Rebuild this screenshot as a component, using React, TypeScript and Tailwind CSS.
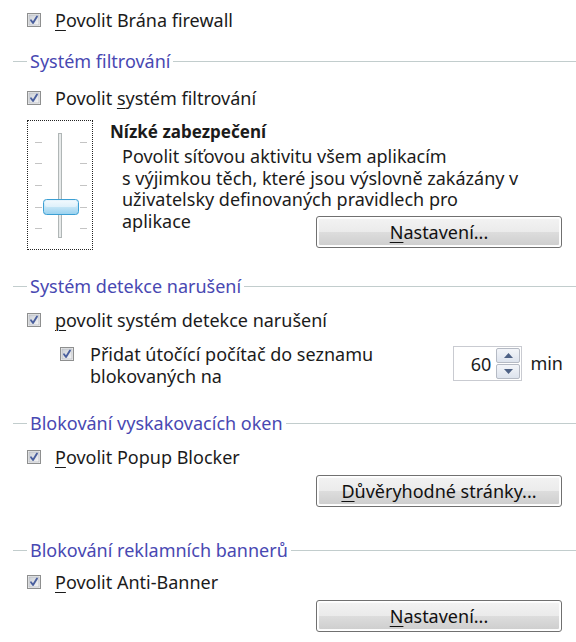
import type { ReactNode } from "react"

const Check = () => (
  <svg width="14" height="14" viewBox="0 0 14 14" className="shrink-0">
    <defs>
      <linearGradient id="cbg" x1="0" y1="0" x2="1" y2="1">
        <stop offset="0" stopColor="#cbcfd5" />
        <stop offset="1" stopColor="#f6f6f6" />
      </linearGradient>
    </defs>
    <rect x="0.5" y="0.5" width="13" height="13" fill="#f4f4f4" stroke="#8e8f8f" />
    <rect x="2" y="2" width="10" height="10" fill="url(#cbg)" stroke="#b8bcc2" strokeWidth="0.8" />
    <path d="M4 7.2 L6 10 L10 3.6" fill="none" stroke="#4a5f9e" strokeWidth="1.9" strokeLinecap="round" strokeLinejoin="round" />
  </svg>
)

const CheckRow = ({ children }: { children: ReactNode }) => (
  <div className="flex h-[22px] items-center pl-[27px]">
    <Check />
    <span className="ml-[14px] whitespace-nowrap">{children}</span>
  </div>
)

const SectionHeader = ({ title, mt }: { title: string; mt: string }) => (
  <div className={`flex h-[22px] items-center ${mt}`}>
    <div className="ml-[13px] h-px w-[14px] bg-[#c2cdcd]" />
    <span className="mx-[3px] whitespace-nowrap text-[#4848b2]">{title}</span>
    <div className="h-px flex-1 bg-[#c2cdcd]" />
  </div>
)

const Key = ({ children }: { children: ReactNode }) => (
  <span className="underline decoration-1 underline-offset-[3px]">{children}</span>
)

const WinButton = ({ children, className }: { children: ReactNode; className: string }) => (
  <div className={`ml-[316px] w-[246px] h-[32px] rounded-[3px] border border-[#707070] p-px ${className}`}>
    <div className="flex h-full items-center justify-center rounded-[2px] border border-[#fcfcfc] bg-[linear-gradient(to_bottom,#f2f2f2_0%,#ebebeb_49%,#dddddd_50%,#cfcfcf_100%)] text-[#111]">
      {children}
    </div>
  </div>
)

const Slider = () => (
  <div className="h-[130px] w-[66px] shrink-0 border border-dotted border-[#222]">
    <svg width="64" height="128" viewBox="0 0 64 128">
      <defs>
        <linearGradient id="thumb" x1="0" y1="0" x2="0" y2="1">
          <stop offset="0" stopColor="#eaf6fd" />
          <stop offset="0.5" stopColor="#c4e5f6" />
          <stop offset="1" stopColor="#98d1ef" />
        </linearGradient>
      </defs>
      <rect x="30.5" y="12.5" width="3" height="104" fill="#e7eaea" stroke="#b0b6b6" />
      {[21, 42, 64, 86, 107].map((y) => (
        <g key={y} stroke="#c4c4c4" strokeWidth="1">
          <line x1="7" y1={y + 0.5} x2="14" y2={y + 0.5} />
          <line x1="52" y1={y + 0.5} x2="59" y2={y + 0.5} />
        </g>
      ))}
      <rect x="15.5" y="78.5" width="35" height="15" rx="3" fill="url(#thumb)" stroke="#3c9fd3" />
      <rect x="17" y="80" width="32" height="6" rx="2" fill="#ffffff" opacity="0.45" />
    </svg>
  </div>
)

const Spin = () => (
  <div className="mt-[3px] ml-[auto] flex h-[35px] w-[69px] border border-[#c9cbd1] bg-white">
    <div className="flex flex-1 items-center justify-end pr-[4px]">60</div>
    <div className="flex w-[26px] flex-col gap-px p-px">
      {[true, false].map((up) => (
        <div
          key={String(up)}
          className="flex flex-1 items-center justify-center rounded-[2px] border border-[#b5bac4] bg-[linear-gradient(to_bottom,#f3f5f9,#dde3ed)]"
        >
          <svg width="9" height="5" viewBox="0 0 9 5">
            <path d={up ? "M0 5 L4.5 0 L9 5 Z" : "M0 0 L4.5 5 L9 0 Z"} fill="#4d6185" />
          </svg>
        </div>
      ))}
    </div>
  </div>
)

export default function App() {
  return (
    <div className="relative flex h-[642px] w-[576px] flex-col overflow-hidden bg-white text-[18px] leading-[22px] text-[#1b1b1b] [font-family:'Noto_Sans','Open_Sans',sans-serif]">
      <div className="mt-[9px]">
        <CheckRow>
          <Key>P</Key>ovolit Brána firewall
        </CheckRow>
      </div>

      <SectionHeader title="Systém filtrování" mt="mt-[19px]" />
      <div className="mt-[15px]">
        <CheckRow>
          Povolit <Key>s</Key>ystém filtrování
        </CheckRow>
      </div>

      <div className="mt-[11px] flex h-[130px] pl-[27px]">
        <Slider />
        <div className="ml-[17px] flex flex-col pt-px">
          <div className="text-[17px] font-bold whitespace-nowrap">Nízké zabezpečení</div>
          <div className="mt-[3px] pl-[12px] leading-[21.5px] whitespace-nowrap">
            Povolit síťovou aktivitu všem aplikacím
            <br />s výjimkou těch, které jsou výslovně zakázány v
            <br />
            uživatelsky definovaných pravidlech pro
            <br />
            aplikace
          </div>
        </div>
      </div>
      <div className="-mt-[34px]">
        <WinButton className="">
          <Key>N</Key>astavení...
        </WinButton>
      </div>

      <SectionHeader title="Systém detekce narušení" mt="mt-[27px]" />
      <div className="mt-[12px]">
        <CheckRow>
          <Key>p</Key>ovolit systém detekce narušení
        </CheckRow>
      </div>
      <div className="mt-[12px] flex pl-[60px] pr-[13px]">
        <div className="pt-[4px]">
          <Check />
        </div>
        <div className="ml-[16px] whitespace-nowrap">
          Přidat útočící počítač do seznamu
          <br />
          blokovaných na
        </div>
        <Spin />
        <div className="ml-[8px] mt-[9px]">min</div>
      </div>

      <SectionHeader title="Blokování vyskakovacích oken" mt="mt-[25px]" />
      <div className="mt-[12px]">
        <CheckRow>
          <Key>P</Key>ovolit Popup Blocker
        </CheckRow>
      </div>
      <WinButton className="mt-[7px]">
        <Key>D</Key>ůvěryhodné stránky...
      </WinButton>

      <SectionHeader title="Blokování reklamních bannerů" mt="mt-[32px]" />
      <div className="mt-[10px]">
        <CheckRow>
          <Key>P</Key>ovolit Anti-Banner
        </CheckRow>
      </div>
      <WinButton className="mt-[7px]">
        <Key>N</Key>astavení...
      </WinButton>
    </div>
  )
}
